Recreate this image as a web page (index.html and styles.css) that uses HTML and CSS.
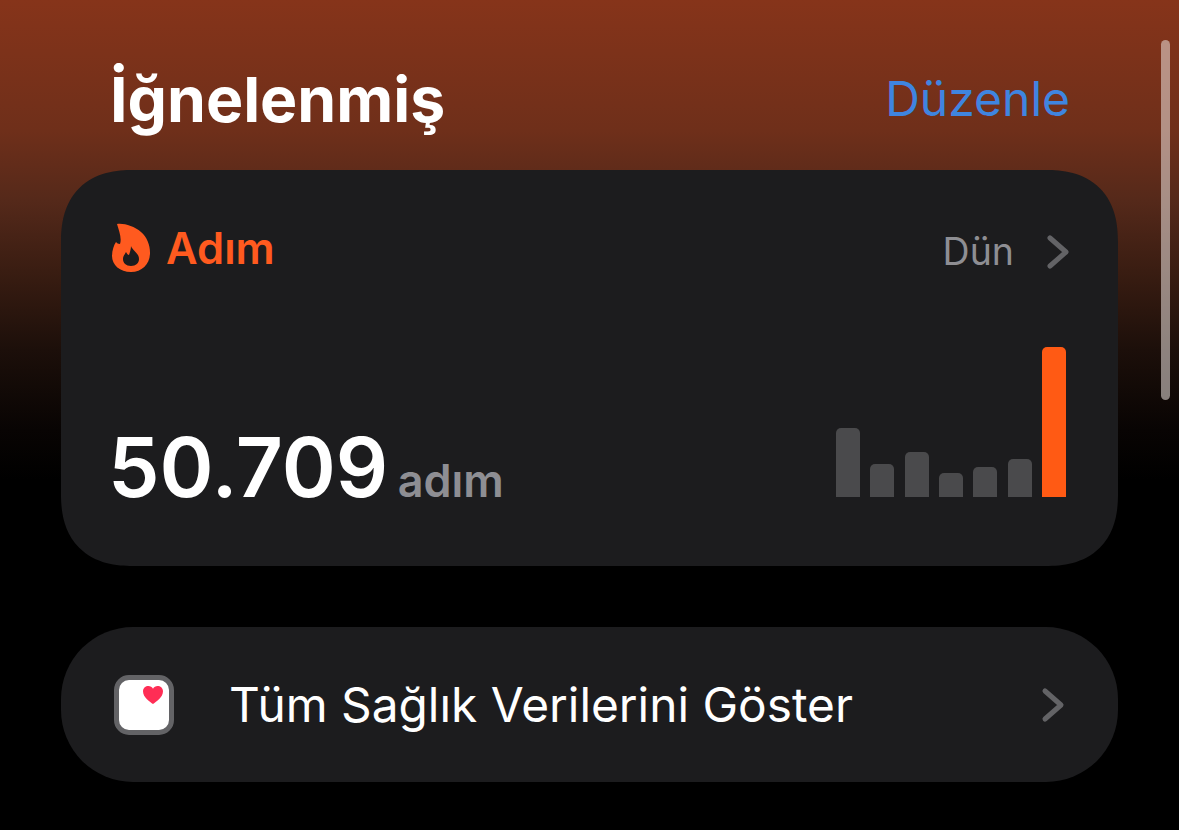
FILE: index.html
```html
<!DOCTYPE html>
<html lang="tr">
<head>
  <meta charset="UTF-8">
  <title>İğnelenmiş</title>
  <link rel="stylesheet" href="styles.css">
</head>
<body>
  <div class="scrollbar"></div>

  <div class="page">
    <div class="header">
      <h1>İğnelenmiş</h1>
      <span class="edit">Düzenle</span>
    </div>

    <div class="card steps">
      <div class="card-top">
        <div class="card-title">
          <svg class="flame" width="40" height="50" viewBox="0 0 40 50">
            <path fill-rule="evenodd" fill="#ff5a1f" d="M6 1C13 0 23 3 30 9C36 14 39 22 39 30C39 41 31 49 20 49C9 49 1 42 1 33C1 27 3 22 5 19C6 20 7 21 9 21C11 15 8 8 6 1ZM20 23C21 27 28 30 28 36C28 40 25 43 20 43C15 43 12 40 12 36C12 33 14 31 15 29C16 31 17 32 18 32C19 29 20 26 20 23Z"/>
          </svg>
          <span>Adım</span>
        </div>
        <div class="card-date">
          <span>Dün</span>
          <svg width="24" height="36" viewBox="0 0 24 36" class="chevron">
            <path d="M4 4L20 18L4 32" fill="none" stroke="#636366" stroke-width="5" stroke-linecap="round" stroke-linejoin="round"/>
          </svg>
        </div>
      </div>

      <div class="card-bottom">
        <div class="value"><strong>50.709</strong> <span>adım</span></div>
        <div class="bars">
          <div class="bar" style="height: 69px"></div>
          <div class="bar" style="height: 33px"></div>
          <div class="bar" style="height: 45px"></div>
          <div class="bar" style="height: 24px"></div>
          <div class="bar" style="height: 30px"></div>
          <div class="bar" style="height: 38px"></div>
          <div class="bar active" style="height: 150px"></div>
        </div>
      </div>
    </div>

    <div class="card all-data">
      <div class="app-icon">
        <svg width="22" height="20" viewBox="0 0 24 22">
          <path fill="#ff2d55" d="M12 21C9 19 1 14 1 7C1 3 4 1 7 1C9 1 11 2 12 4C13 2 15 1 17 1C20 1 23 3 23 7C23 14 15 19 12 21Z"/>
        </svg>
      </div>
      <span class="all-label">Tüm Sağlık Verilerini Göster</span>
      <svg width="24" height="36" viewBox="0 0 24 36" class="chevron">
        <path d="M4 4L20 18L4 32" fill="none" stroke="#636366" stroke-width="5" stroke-linecap="round" stroke-linejoin="round"/>
      </svg>
    </div>
  </div>
</body>
</html>
```

FILE: styles.css
```css
html, body {
  height: 100%;
}

body {
  margin: 0;
  overflow: hidden;
  background: linear-gradient(to bottom, #86341a 0, #6f2f1a 130px, #55291a 200px, #3a1d12 270px, #1c0f0a 350px, #080403 430px, #000 480px);
  color: #fff;
  font-family: Inter, "Liberation Sans", sans-serif;
}

.page {
  display: flex;
  flex-direction: column;
  padding: 0 61px;
}

.scrollbar {
  position: absolute;
  top: 40px;
  right: 9px;
  width: 9px;
  height: 360px;
  border-radius: 5px;
  background: rgba(235, 225, 222, 0.55);
}

.header {
  display: flex;
  justify-content: space-between;
  align-items: center;
  height: 170px;
  padding: 27px 48px 0 49px;
  box-sizing: border-box;
}

h1 {
  margin: 0;
  font-size: 62.5px;
  font-weight: 700;
}

.edit {
  color: #3f85e0;
  font-size: 48px;
}

.card {
  background: #1c1c1e;
}

.steps {
  display: flex;
  flex-direction: column;
  height: 396px;
  padding: 50px 48px 69px 50px;
  box-sizing: border-box;
  border-radius: 72px;
  corner-shape: superellipse(1.25);
  margin-bottom: 61px;
}

.card-top {
  display: flex;
  justify-content: space-between;
  align-items: center;
  height: 56px;
}

.card-title {
  display: flex;
  align-items: center;
  gap: 15px;
  color: #ff5a1f;
  font-size: 43.5px;
  font-weight: 600;
}

.card-date {
  display: flex;
  align-items: center;
  gap: 32px;
  color: #8e8e93;
  font-size: 37.5px;
  padding-top: 7px;
}

.card-bottom {
  display: flex;
  justify-content: space-between;
  align-items: flex-end;
  margin-top: auto;
}

.value {
  margin-left: -3px;
  line-height: 56px;
  color: #8e8e93;
  font-size: 45px;
  font-weight: 600;
  transform: translateY(12px);
}

.value strong {
  margin-right: -2px;
  color: #fff;
  font-size: 82px;
  font-weight: 600;
}

.bars {
  display: flex;
  align-items: flex-end;
  gap: 10.33px;
  padding-right: 4px;
}

.bar {
  width: 24px;
  border-radius: 5px 5px 0 0;
  background: #4a4a4c;
}

.bar.active {
  background: #ff5a14;
}

.all-data {
  display: flex;
  align-items: center;
  height: 155px;
  padding: 0 53px;
  box-sizing: border-box;
  border-radius: 72px;
}

.app-icon {
  display: flex;
  justify-content: flex-end;
  align-items: flex-start;
  flex: none;
  width: 60px;
  height: 60px;
  padding: 5px 5px;
  box-sizing: border-box;
  border: 5px solid #636366;
  border-radius: 15px;
  background: #fff;
}

.all-label {
  flex: 1;
  margin-left: 55px;
  font-size: 47.8px;
}
```
